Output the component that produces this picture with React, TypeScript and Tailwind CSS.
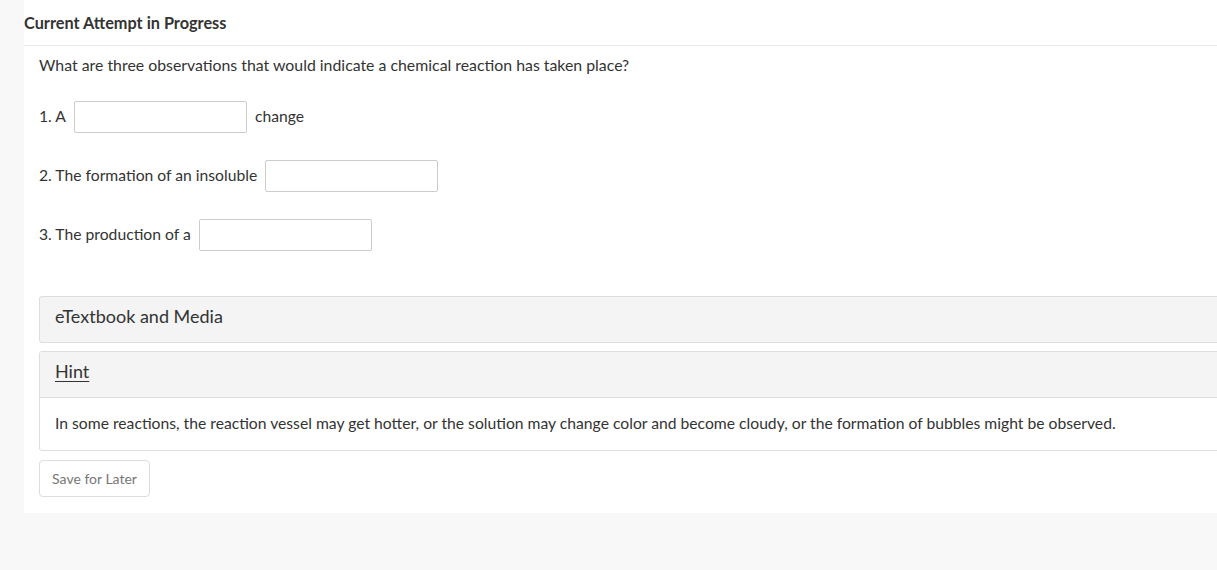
export default function App() {
  const font = { fontFamily: 'Lato, "Open Sans", sans-serif' };
  return (
    <div
      className="w-[1217px] h-[570px] overflow-hidden bg-[#f8f8f8] pl-[24px] text-[#333]"
      style={font}
    >
      <div className="w-[1220px] bg-white pb-[16px]">
        <div className="h-[46px] flex items-center border-b border-[#e8e8e8]">
          <h2 className="text-[16.3px] font-bold text-[#333] mt-[2px]">
            Current Attempt in Progress
          </h2>
        </div>
        <div className="pl-[15px]">
          <p className="text-[15.85px] mt-[9px] leading-[20px]">
            What are three observations that would indicate a chemical reaction has taken place?
          </p>

          <div className="flex items-center gap-[8px] mt-[26px] text-[15.7px]">
            <span>1. A</span>
            <input className="w-[173px] h-[32px] border border-[#ccc] rounded-[2px]" />
            <span>change</span>
          </div>

          <div className="flex items-center gap-[8px] mt-[27px] text-[15.7px]">
            <span>2. The formation of an insoluble</span>
            <input className="w-[173px] h-[32px] border border-[#ccc] rounded-[2px]" />
          </div>

          <div className="flex items-center gap-[8px] mt-[27px] text-[15.7px]">
            <span>3. The production of a</span>
            <input className="w-[173px] h-[32px] border border-[#ccc] rounded-[2px]" />
          </div>

          <div className="mt-[45px] h-[47px] flex items-center bg-[#f4f4f4] border border-[#ddd] rounded-[3px] pl-[15px] text-[18px]">
            <span className="-mt-[6px]">eTextbook and Media</span>
          </div>

          <div className="mt-[8px] border border-[#ddd] rounded-[3px]">
            <div className="h-[46px] flex items-center bg-[#f4f4f4] border-b border-[#ddd] pl-[15px] text-[18px]">
              <span className="underline underline-offset-[3px] -mt-[6px]">Hint</span>
            </div>
            <div className="h-[52px] flex items-center pl-[15px] text-[15.7px]">
              In some reactions, the reaction vessel may get hotter, or the solution may change color and become cloudy, or the formation of bubbles might be observed.
            </div>
          </div>

          <button className="mt-[9px] w-[111px] h-[37px] border border-[#ddd] rounded-[4px] text-[14px] text-[#777]">
            Save for Later
          </button>
        </div>
      </div>
    </div>
  );
}
